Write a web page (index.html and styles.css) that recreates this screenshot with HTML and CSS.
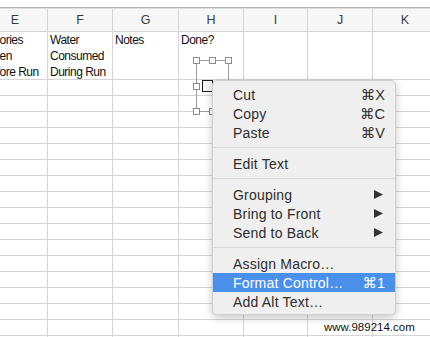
FILE: index.html
```html
<!DOCTYPE html>
<html>
<head>
<meta charset="utf-8">
<link rel="stylesheet" href="styles.css">
</head>
<body>
<div class="sheet">
  <div class="topline"></div>
  <div class="row head"><div>E</div><div>F</div><div>G</div><div>H</div><div>I</div><div>J</div><div>K</div></div>
  <div class="row r1">
    <div class="first">Calories<br>Eaten<br>Before Run</div>
    <div>Water<br>Consumed<br>During Run</div>
    <div>Notes</div>
    <div>Done?</div>
    <div></div><div></div><div></div>
  </div>
  <div class="row e"><div></div><div></div><div></div><div></div><div></div><div></div><div></div></div>
  <div class="row e"><div></div><div></div><div></div><div></div><div></div><div></div><div></div></div>
  <div class="row e"><div></div><div></div><div></div><div></div><div></div><div></div><div></div></div>
  <div class="row e"><div></div><div></div><div></div><div></div><div></div><div></div><div></div></div>
  <div class="row e"><div></div><div></div><div></div><div></div><div></div><div></div><div></div></div>
  <div class="row e"><div></div><div></div><div></div><div></div><div></div><div></div><div></div></div>
  <div class="row e"><div></div><div></div><div></div><div></div><div></div><div></div><div></div></div>
  <div class="row e"><div></div><div></div><div></div><div></div><div></div><div></div><div></div></div>
  <div class="row e"><div></div><div></div><div></div><div></div><div></div><div></div><div></div></div>
  <div class="row e"><div></div><div></div><div></div><div></div><div></div><div></div><div></div></div>
  <div class="row e"><div></div><div></div><div></div><div></div><div></div><div></div><div></div></div>
  <div class="row e"><div></div><div></div><div></div><div></div><div></div><div></div><div></div></div>
  <div class="row e"><div></div><div></div><div></div><div></div><div></div><div></div><div></div></div>
  <div class="row e"><div></div><div></div><div></div><div></div><div></div><div></div><div></div></div>
  <div class="row e"><div></div><div></div><div></div><div></div><div></div><div></div><div></div></div>
  <div class="row e"><div></div><div></div><div></div><div></div><div></div><div></div><div></div></div>
  <div class="row e"><div></div><div></div><div></div><div></div><div></div><div></div><div></div></div>
</div>

<div class="selection">
  <span class="h tl"></span><span class="h tm"></span><span class="h tr"></span>
  <span class="h ml"></span><span class="h mr"></span>
  <span class="h bl"></span><span class="h bm"></span><span class="h br"></span>
</div>
<div class="checkbox"></div>

<div class="menu">
  <div class="item"><span>Cut</span><span class="key">⌘X</span></div>
  <div class="item"><span>Copy</span><span class="key">⌘C</span></div>
  <div class="item"><span>Paste</span><span class="key">⌘V</span></div>
  <div class="sep"></div>
  <div class="item"><span>Edit Text</span></div>
  <div class="sep"></div>
  <div class="item"><span>Grouping</span><svg class="arrow" width="9" height="9" viewBox="0 0 9 9"><polygon points="0,0 9,4.5 0,9"/></svg></div>
  <div class="item"><span>Bring to Front</span><svg class="arrow" width="9" height="9" viewBox="0 0 9 9"><polygon points="0,0 9,4.5 0,9"/></svg></div>
  <div class="item"><span>Send to Back</span><svg class="arrow" width="9" height="9" viewBox="0 0 9 9"><polygon points="0,0 9,4.5 0,9"/></svg></div>
  <div class="sep"></div>
  <div class="item"><span>Assign Macro…</span></div>
  <div class="item active"><span>Format Control…</span><span class="key">⌘1</span></div>
  <div class="item"><span>Add Alt Text…</span></div>
</div>

<div class="watermark">www.989214.com</div>
</body>
</html>
```

FILE: styles.css
```css
html, body {
  margin: 0;
  padding: 0;
}
body {
  width: 430px;
  height: 337px;
  overflow: hidden;
  position: relative;
  background: #ffffff;
  font-family: "Liberation Sans", Arial, sans-serif;
}
.sheet {
  padding-top: 7px;
  margin-left: -17px;
}
.topline {
  height: 0;
  border-top: 1px solid #b4b4b4;
  border-bottom: 1px solid #dedede;
}
.row {
  display: grid;
  grid-template-columns: 65px 65px 66px 65px 64px 65px 65px;
}
.row > div {
  border-right: 1px solid #d5d5d5;
  border-bottom: 1px solid #d5d5d5;
  overflow: hidden;
  white-space: nowrap;
}
.head > div {
  height: 22px;
  line-height: 22px;
  background: #f7f7f7;
  text-align: center;
  font-size: 12.5px;
  color: #3a3a3a;
}
.r1 > div {
  height: 47px;
  padding-left: 2px;
  font-size: 12px;
  line-height: 16px;
  letter-spacing: -0.5px;
  color: #111;
}
.r1 > .first {
  padding-left: 0;
}
.e > div {
  height: 15px;
}

/* selected checkbox form control */
.selection {
  position: absolute;
  left: 196px;
  top: 60px;
  width: 31px;
  height: 50px;
  border: 1px solid #9c9c9c;
}
.h {
  position: absolute;
  width: 5px;
  height: 5px;
  background: #fff;
  border: 1px solid #8c8c8c;
}
.tl { left: -4px; top: -4px; }
.tm { left: 12px; top: -4px; }
.tr { right: -4px; top: -4px; }
.ml { left: -4px; top: 22px; }
.mr { right: -4px; top: 22px; }
.bl { left: -4px; bottom: -4px; }
.bm { left: 12px; bottom: -4px; }
.br { right: -4px; bottom: -4px; }
.checkbox {
  position: absolute;
  left: 202px;
  top: 80px;
  width: 9px;
  height: 10px;
  background: #f6f6f6;
  border: 1.5px solid #1f1f1f;
}

/* context menu */
.menu {
  position: absolute;
  left: 212px;
  top: 80px;
  width: 184px;
  box-sizing: border-box;
  padding: 4px 0 3px;
  background: #efefef;
  border: 1px solid #cfcfcf;
  border-radius: 5px;
  box-shadow: 0 3px 9px rgba(0, 0, 0, 0.22);
  font-size: 14px;
  letter-spacing: 0.2px;
  color: #2e2e2e;
}
.item {
  height: 19px;
  display: flex;
  align-items: center;
  justify-content: space-between;
  padding: 0 10px 0 20px;
}
.item.active {
  background: #4a8fea;
  color: #ffffff;
}
.key {
  font-family: "Liberation Sans", "DejaVu Sans", sans-serif;
  letter-spacing: 0;
  font-size: 14.5px;
}
.arrow {
  fill: #333;
  margin-right: 2px;
}
.sep {
  height: 1px;
  margin: 5px 0 6px;
  background: #d9d9d9;
}

.watermark {
  position: absolute;
  left: 324px;
  top: 320px;
  font-size: 11.5px;
  line-height: 14px;
  color: #111;
}
```
